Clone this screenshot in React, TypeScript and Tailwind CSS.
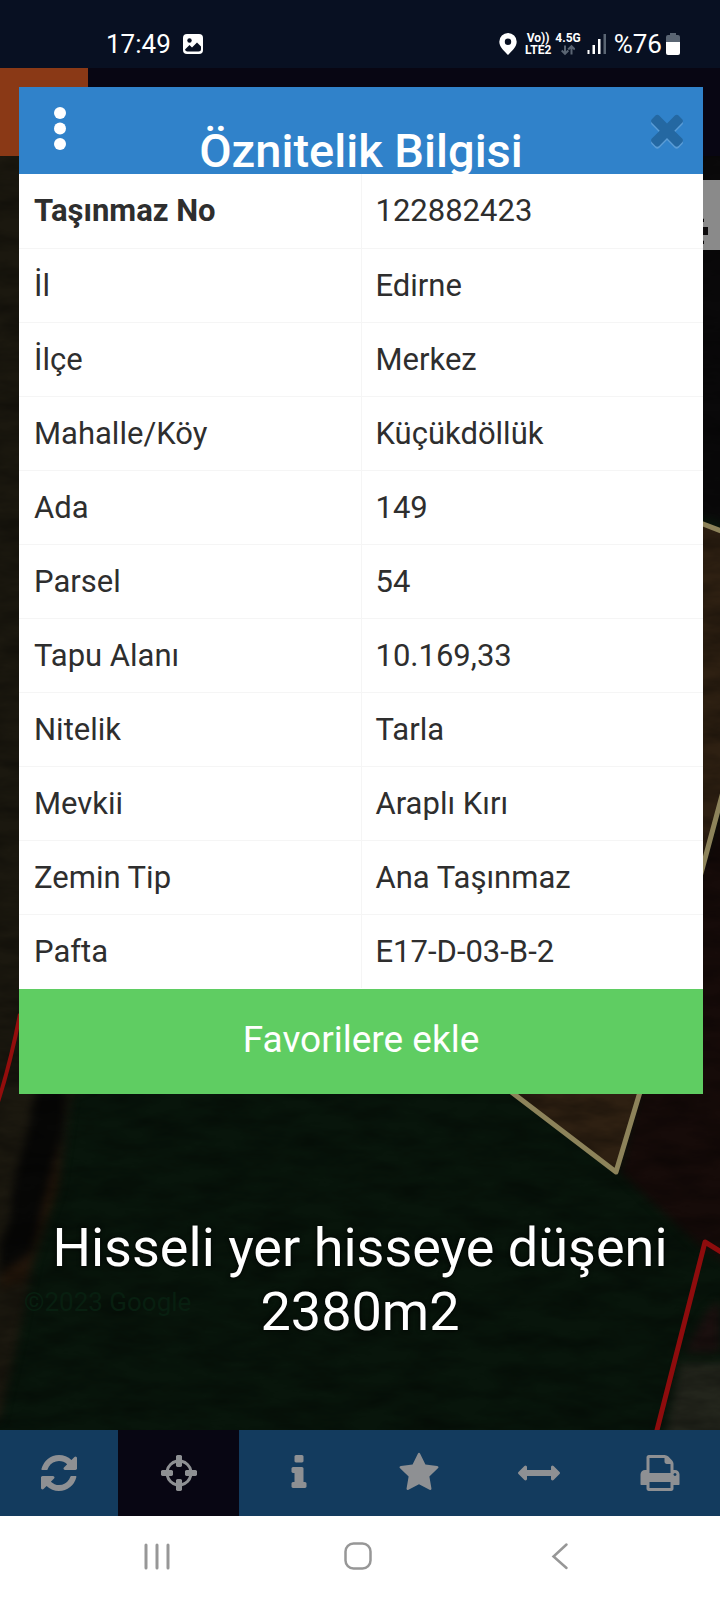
import React from "react";

const rows: [string, string][] = [
  ["Taşınmaz No", "122882423"],
  ["İl", "Edirne"],
  ["İlçe", "Merkez"],
  ["Mahalle/Köy", "Küçükdöllük"],
  ["Ada", "149"],
  ["Parsel", "54"],
  ["Tapu Alanı", "10.169,33"],
  ["Nitelik", "Tarla"],
  ["Mevkii", "Araplı Kırı"],
  ["Zemin Tip", "Ana Taşınmaz"],
  ["Pafta", "E17-D-03-B-2"],
];

const icons = {
  refresh:
    "M1639 1056q0 5-1 7-64 268-268 434.5t-478 166.5q-146 0-282.5-55t-243.5-157l-129 129q-19 19-45 19t-45-19-19-45v-448q0-26 19-45t45-19h448q26 0 45 19t19 45-19 45l-137 137q71 66 161 102t187 36q134 0 250-65t186-179q11-17 53-117 8-23 30-23h192q13 0 22.5 9.5t9.5 22.5zm25-800v448q0 26-19 45t-45 19h-448q-26 0-45-19t-19-45 19-45l138-138q-148-137-349-137-134 0-250 65t-186 179q-11 17-53 117-8 23-30 23h-199q-13 0-22.5-9.5t-9.5-22.5v-7q65-268 270-434.5t480-166.5q146 0 284 55.5t245 156.5l130-129q19-19 45-19t45 19 19 45z",
  crosshairs:
    "M1325 1024h-109q-26 0-45-19t-19-45v-128q0-26 19-45t45-19h109q-32-108-112.5-188.5t-188.5-112.5v109q0 26-19 45t-45 19h-128q-26 0-45-19t-19-45v-109q-108 32-188.5 112.5t-112.5 188.5h109q26 0 45 19t19 45v128q0 26-19 45t-45 19h-109q32 108 112.5 188.5t188.5 112.5v-109q0-26 19-45t45-19h128q26 0 45 19t19 45v109q108-32 188.5-112.5t112.5-188.5zm339-192v128q0 26-19 45t-45 19h-143q-37 161-154.5 278.5t-278.5 154.5v143q0 26-19 45t-45 19h-128q-26 0-45-19t-19-45v-143q-161-37-278.5-154.5t-154.5-278.5h-143q-26 0-45-19t-19-45v-128q0-26 19-45t45-19h143q37-161 154.5-278.5t278.5-154.5v-143q0-26 19-45t45-19h128q26 0 45 19t19 45v143q161 37 278.5 154.5t154.5 278.5h143q26 0 45 19t19 45z",
  info:
    "M1216 1344v128q0 26-19 45t-45 19h-512q-26 0-45-19t-19-45v-128q0-26 19-45t45-19h64v-384h-64q-26 0-45-19t-19-45v-128q0-26 19-45t45-19h384q26 0 45 19t19 45v576h64q26 0 45 19t19 45zm-128-1152v192q0 26-19 45t-45 19h-256q-26 0-45-19t-19-45v-192q0-26 19-45t45-19h256q26 0 45 19t19 45z",
  star:
    "M1728 647q0 22-26 48l-363 354 86 500q1 7 1 20 0 21-10.5 35.5t-30.5 14.5q-19 0-40-12l-449-236-449 236q-22 12-40 12-21 0-31.5-14.5t-10.5-35.5q0-6 2-20l86-500-364-354q-25-27-25-48 0-37 56-46l502-73 225-455q19-41 49-41t49 41l225 455 502 73q56 9 56 46z",
  width:
    "M1792 896q0 26-19 45l-256 256q-19 19-45 19t-45-19-19-45v-128h-1024v128q0 26-19 45t-45 19-45-19l-256-256q-19-19-19-45t19-45l256-256q19-19 45-19t45 19 19 45v128h1024v-128q0-26 19-45t45-19 45 19l256 256q19 19 19 45z",
  print:
    "M448 1536h896v-256h-896v256zm0-640h896v-384h-160q-40 0-68-28t-28-68v-160h-640v640zm1152 64q0-26-19-45t-45-19-45 19-19 45 19 45 45 19 45-19 19-45zm128 0v416q0 13-9.5 22.5t-22.5 9.5h-224v160q0 40-28 68t-68 28h-960q-40 0-68-28t-28-68v-160h-224q-13 0-22.5-9.5t-9.5-22.5v-416q0-79 56.5-135.5t135.5-56.5h64v-544q0-40 28-68t68-28h672q40 0 88 20t76 48l152 152q28 28 48 76t20 88v256h64q79 0 135.5 56.5t56.5 135.5z",
  times:
    "M1490 1322q0 40-28 68l-136 136q-28 28-68 28t-68-28l-294-294-294 294q-28 28-68 28t-68-28l-136-136q-28-28-28-68t28-68l294-294-294-294q-28-28-28-68t28-68l136-136q28-28 68-28t68 28l294 294 294-294q28-28 68-28t68 28l136 136q28 28 28 68t-28 68l-294 294 294 294q28 28 28 68z",
};

const tools: { name: keyof typeof icons; label: string; active?: boolean }[] = [
  { name: "refresh", label: "Yenile" },
  { name: "crosshairs", label: "Konum", active: true },
  { name: "info", label: "Bilgi" },
  { name: "star", label: "Favoriler" },
  { name: "width", label: "Ölçüm" },
  { name: "print", label: "Yazdır" },
];

function Icon({ name, className }: { name: keyof typeof icons; className: string }) {
  return (
    <svg viewBox="0 0 1792 1792" fill="currentColor" className={className} aria-hidden="true">
      <path d={icons[name]} />
    </svg>
  );
}

function StatusBar() {
  return (
    <div className="flex h-17 items-center justify-between bg-[#081022] pr-10 pl-[106px] pt-5 text-white">
      <div className="flex items-center gap-3">
        <span className="text-[26px] leading-8">17:49</span>
        <svg viewBox="0 0 20 20" className="size-5" aria-hidden="true">
          <rect width="20" height="20" rx="4" fill="#fff" />
          <circle cx="6.5" cy="6.500" r="2.200" fill="#081022" />
          <path d="M2 15.500 6.500 11 9 13.500 14 8.500 18 12.500V15a2.500 2.500 0 0 1-2.500 2.500h-11A2.500 2.500 0 0 1 2 15.500Z" fill="#081022" />
        </svg>
      </div>
      <div className="flex items-center">
        <svg viewBox="0 0 18 22" className="mr-2 h-[22px] w-[18px]" aria-hidden="true">
          <path fillRule="evenodd" fill="#fff" d="M9 0a8.700 8.700 0 0 0-8.700 8.700C.3 14.500 6 18.500 9 22c3-3.500 8.700-7.500 8.700-13.300A8.700 8.700 0 0 0 9 0Zm0 5.500a3.200 3.200 0 1 1 0 6.400 3.200 3.200 0 0 1 0-6.400Z" />
        </svg>
        <div className="mr-1 flex flex-col items-center text-[12px] leading-3 font-bold">
          <span>Vo))</span>
          <span>LTE2</span>
        </div>
        <div className="mr-1.5 flex flex-col items-center text-[12px] leading-3 font-bold">
          <span>4.5G</span>
          <svg viewBox="0 0 14 11" className="h-3 w-3.5" fill="none" stroke="#5a6573" strokeWidth="2" aria-hidden="true">
            <path d="M4 1v8M.7 6 4 9.300 7.300 6M10.500 10V2M7.200 5l3.300-3.300L13.800 5" />
          </svg>
        </div>
        <svg viewBox="0 0 19 20" className="mr-2 h-5 w-[19px]" aria-hidden="true">
          <path d="M.5 16h2v4h-2zM5.500 11H8v9H5.500zM11 5h2.500v15H11z" fill="#fff" />
          <path d="M16.500 0H19v20h-2.500z" fill="#5a6573" />
        </svg>
        <span className="mr-1 text-[26px] leading-8">%76</span>
        <svg viewBox="0 0 14 22" className="h-[22px] w-3.5" aria-hidden="true">
          <path d="M4 0h6v2h2a2 2 0 0 1 2 2v6H0V4a2 2 0 0 1 2-2h2Z" fill="#5a6573" />
          <path d="M0 9h14v11a2 2 0 0 1-2 2H2a2 2 0 0 1-2-2Z" fill="#fff" />
        </svg>
      </div>
    </div>
  );
}

function MapCanvas() {
  return (
    <svg
      viewBox="0 68 720 1362"
      preserveAspectRatio="xMidYMid slice"
      className="absolute inset-0 h-full w-full"
      aria-hidden="true"
    >
      <defs>
        <filter id="soft" x="-20%" y="-20%" width="140%" height="140%" colorInterpolationFilters="sRGB">
          <feGaussianBlur stdDeviation="4" />
        </filter>
        <filter id="grain" x="0" y="0" width="100%" height="100%" colorInterpolationFilters="sRGB">
          <feTurbulence type="fractalNoise" baseFrequency="0.02 0.06" numOctaves="4" seed="7" />
          <feColorMatrix values="0 0 0 0 0  0 0 0 0 0  0 0 0 0 0  1.600 0 0 0 -0.550" />
        </filter>
      </defs>
      <rect y="68" width="720" height="1362" fill="#08150b" />
      <g filter="url(#soft)">
        <path d="M-20 140H300V1000L72 1094 60 1180 34 1260 18 1340 0 1420H-20Z" fill="#1b180f" />
        <path d="M38 1080H66L64 1130 54 1160 44 1200 34 1250 0 1275V1245L10 1220 14 1180 26 1140Z" fill="#070706" />
        <path d="M60 1140 58 1190 40 1240 26 1280 0 1290 2 1272 32 1252 44 1200Z" fill="#21150a" />
        <path d="M400 100H740V528L700 516H400Z" fill="#0a090a" />
        <path d="M640 1090 700 868 740 760V1270L704 1250 620 1172Z" fill="#160b09" />
        <path d="M708 1310 720 1300V1352H684Z" fill="#1c1110" />
        <path d="M680 1363H740V1450H662Z" fill="#23251c" />
      </g>
      <path d="M560 490 703 523 724 532V790L703 866 640 1092 616 1172 514 1094 400 1000Z" fill="#2e2012" />
      <rect y="156" width="720" height="1274" filter="url(#grain)" opacity="0.4" />
      <g fill="none" strokeLinejoin="round">
        <path d="M690 519 724 532M724 788 703 866 640 1092 616 1172 510 1091" stroke="#8d835a" strokeWidth="5" />
        <path d="M20 1014Q10 1066-4 1108" stroke="#930d0c" strokeWidth="4" />
        <path d="M656 1434 705 1242 726 1255" stroke="#8e0c0d" strokeWidth="5" />
      </g>
      <rect y="68" width="720" height="88" fill="#080613" />
      <rect y="68" width="88" height="88" fill="#8a3916" />
      <rect x="680" y="180" width="40" height="70" fill="#8a8a8a" />
      <path d="M700 227h8v8h-8zM702 218l2 1v3h-2zM702 240l2 1v3h-2z" fill="#0c0a0b" />
    </svg>
  );
}

export default function App() {
  return (
    <div className="flex min-h-screen flex-col overflow-hidden bg-[#08150b] font-[Roboto,'Noto_Sans',sans-serif]">
      <StatusBar />

      <main className="relative flex-1">
        <MapCanvas />
        <p className="absolute bottom-28 left-6 text-[26px] leading-8 text-[#081f10]">©2023 Google</p>

        <section
          role="dialog"
          aria-labelledby="dialog-title"
          className="relative mt-[19px] mr-[17px] ml-[19px] bg-white"
        >
          <header className="relative h-[87px] overflow-hidden bg-[#3082ca] pt-9 text-center">
            <h1 id="dialog-title" className="text-[47px] leading-[56px] font-medium text-white">
              Öznitelik Bilgisi
            </h1>
            <button type="button" aria-label="Menü" className="absolute top-4 left-[31px] p-1">
              <svg viewBox="0 0 12 44" fill="#fff" className="h-11 w-3">
                <circle cx="6" cy="6" r="6" />
                <circle cx="6" cy="21.500" r="6" />
                <circle cx="6" cy="37" r="6" />
              </svg>
            </button>
            <button
              type="button"
              aria-label="Kapat"
              className="absolute top-[18px] right-3 text-[#2468a2] drop-shadow-[0_2px_0_#5a9cd6]"
            >
              <Icon name="times" className="size-12" />
            </button>
          </header>

          <div className="pb-px">
            <table className="w-full table-fixed border-collapse text-left text-[31px] leading-[37px] text-[#2e2e2e]">
              <tbody>
                {rows.map(([label, value], i) => (
                  <tr key={label} className="h-[74px] border-b border-[#f5f5f5] last:border-b-0">
                    <th
                      scope="row"
                      className={
                        i === 0
                          ? "border-r border-[#f5f5f5] px-[15px] font-bold"
                          : "border-r border-[#f5f5f5] px-[15px] font-normal"
                      }
                    >
                      {label}
                    </th>
                    <td className="px-3.5">{value}</td>
                  </tr>
                ))}
              </tbody>
            </table>
          </div>

          <button
            type="button"
            className="block h-[105px] w-full bg-[#5fcd62] pb-1 text-[37px] leading-[44px] text-white"
          >
            Favorilere ekle
          </button>
        </section>

        <p className="relative mt-[122px] px-10 pb-20 text-center text-[54px] leading-16 text-white drop-shadow-[0_0_2px_#000]">
          Hisseli yer hisseye düşeni 2380m2
        </p>
      </main>

      <nav
        aria-label="Harita araçları"
        className="relative grid grid-cols-[118fr_121fr_120fr_120fr_120fr_121fr] bg-[#133b5e] text-[#8e9093]"
      >
        {tools.map((t) => (
          <button
            key={t.name}
            type="button"
            aria-label={t.label}
            className={
              t.active
                ? "flex h-[86px] items-center justify-center bg-[#080613]"
                : "flex h-[86px] items-center justify-center"
            }
          >
            <Icon name={t.name} className="size-[42px]" />
          </button>
        ))}
      </nav>

      <nav aria-label="Sistem" className="relative grid h-21 grid-cols-3 bg-white pr-15 pb-3 pl-14 pt-2">
        <button type="button" aria-label="Son uygulamalar" className="flex items-center justify-center">
          <svg viewBox="0 0 28 28" className="size-7" fill="none" stroke="#979797" strokeWidth="3" strokeLinecap="round">
            <path d="M3 3v23M14 3v23M25 3v23" />
          </svg>
        </button>
        <button type="button" aria-label="Ana ekran" className="flex items-center justify-center">
          <svg viewBox="0 0 28 28" className="size-7" fill="none" stroke="#979797" strokeWidth="2.500">
            <rect x="1.500" y="1.500" width="25" height="25" rx="8" />
          </svg>
        </button>
        <button type="button" aria-label="Geri" className="flex items-center justify-center">
          <svg viewBox="0 0 28 28" className="size-7" fill="none" stroke="#979797" strokeWidth="2.500" strokeLinecap="round">
            <path d="M21.500 2.500 8.500 14.500 21.500 26" />
          </svg>
        </button>
      </nav>
    </div>
  );
}
